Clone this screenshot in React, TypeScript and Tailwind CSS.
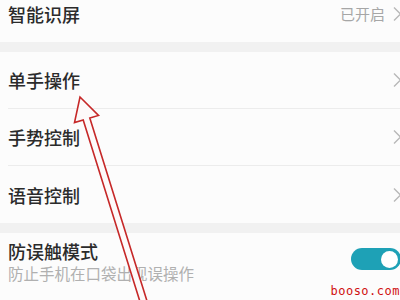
import React from 'react';

const font = { fontFamily: '"Noto Sans CJK SC", "Noto Sans", sans-serif' };

const Chevron: React.FC = () => (
  <svg width="9" height="16" viewBox="0 0 9 16" className="shrink-0 -mr-[2px]">
    <path d="M1 1.5 L7.5 8 L1 14.5" fill="none" stroke="#b8b8b8" strokeWidth="1.4" />
  </svg>
);

const NavRow: React.FC<{ title: string; value?: string; last?: boolean }> = ({ title, value, last }) => (
  <div className="h-[57px] pl-2 bg-[#fcfcfc]">
    <div className={`h-full flex items-center justify-between ${last ? '' : 'border-b border-[#ececec]'}`}>
      <span className="text-[18px] leading-none font-medium text-[#2b2b2b]">{title}</span>
      <div className="flex items-center gap-2">
        {value && <span className="text-[15px] leading-none text-[#a6a6a6]">{value}</span>}
        <Chevron />
      </div>
    </div>
  </div>
);

export default function App() {
  return (
    <div className="relative w-[400px] h-[300px] overflow-hidden bg-[#fcfcfc]" style={font}>
      <div className="-mt-[15px] flex flex-col">
        <NavRow title="智能识屏" value="已开启" last />
        <div className="h-[10px] bg-[#f1f1f1]" />
        <NavRow title="单手操作" />
        <NavRow title="手势控制" />
        <NavRow title="语音控制" last />
        <div className="h-[10px] bg-[#f1f1f1]" />
        <div className="h-[70px] pl-2 flex items-center justify-between bg-[#fcfcfc]">
          <div className="flex flex-col gap-[6px] -mt-[12px]">
            <span className="text-[18px] leading-none font-medium text-[#2b2b2b]">防误触模式</span>
            <span className="text-[15.5px] leading-none text-[#b0b0b0]">防止手机在口袋出现误操作</span>
          </div>
          <div className="-mt-[18px] w-[50px] h-[22px] rounded-full bg-[#1ea1b6] flex items-center justify-end pr-[3px] shrink-0 -mr-[1px]">
            <div className="w-[17px] h-[17px] rounded-full bg-white" />
          </div>
        </div>
      </div>

      {/* red arrow annotation */}
      <svg className="absolute inset-0" width="400" height="300" viewBox="0 0 400 300">
        <polygon
          points="80,97 98.5,115.4 89.8,118 149.5,309 142.9,311 83.2,120 74.5,122.6"
          fill="#fdfafa"
          stroke="#c62828"
          strokeWidth="1.6"
          strokeLinejoin="miter"
        />
      </svg>

      <span
        className="absolute right-[0px] bottom-[3px] text-[12px] leading-none tracking-[0.5px] text-[#d01010]"
        style={{ fontFamily: '"DejaVu Sans Mono", monospace' }}
      >
        booso.com
      </span>
    </div>
  );
}
